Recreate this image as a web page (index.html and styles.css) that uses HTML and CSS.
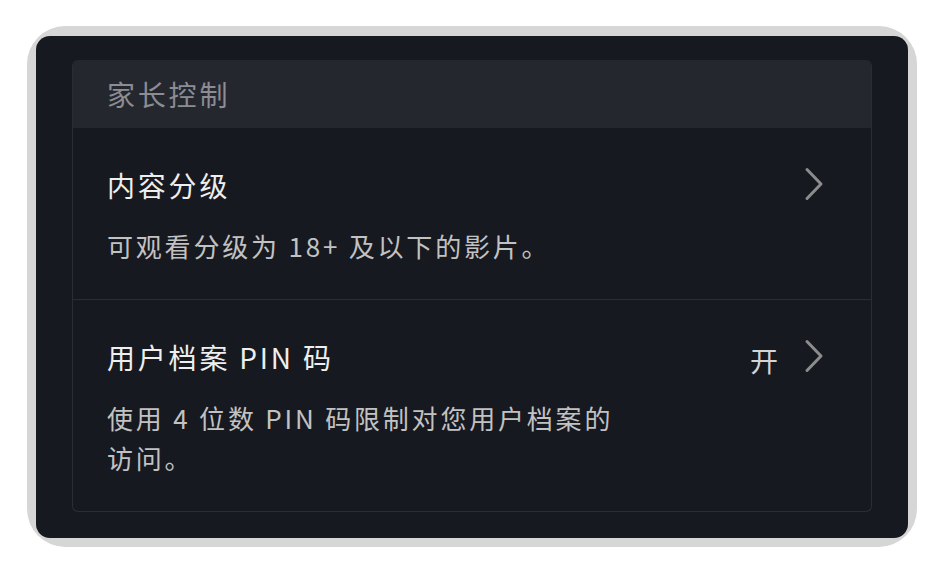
FILE: index.html
```html
<!DOCTYPE html>
<html lang="zh-CN">
<head>
  <meta charset="UTF-8">
  <meta name="viewport" content="width=device-width, initial-scale=1.0">
  <title>家长控制</title>
  <link rel="stylesheet" href="styles.css">
</head>
<body>
  <div class="frame">
    <div class="panel">
      <div class="card">
        <div class="card-header">家长控制</div>
        <div class="row">
          <div class="row-text">
            <div class="row-title">内容分级</div>
            <div class="row-desc">可观看分级为 18+ 及以下的影片。</div>
          </div>
          <div class="row-side">
            <svg class="chevron" width="20" height="34" viewBox="0 0 20 34">
              <polyline points="3,2.5 17,17 3,31.5" />
            </svg>
          </div>
        </div>
        <div class="row">
          <div class="row-text">
            <div class="row-title">用户档案 PIN 码</div>
            <div class="row-desc">使用 4 位数 PIN 码限制对您用户档案的访问。</div>
          </div>
          <div class="row-side">
            <span class="row-value">开</span>
            <svg class="chevron" width="20" height="34" viewBox="0 0 20 34">
              <polyline points="3,2.5 17,17 3,31.5" />
            </svg>
          </div>
        </div>
      </div>
    </div>
  </div>
</body>
</html>
```

FILE: styles.css
```css
body {
  margin: 0;
  background: #ffffff;
  font-family: "Noto Sans CJK SC", "Noto Sans", sans-serif;
}
.frame {
  margin: 26px 0 0 27px;
  width: 890px;
  box-sizing: border-box;
  padding: 10px 9px 9px 9px;
  background: #d6d6d6;
  border-radius: 38px;
}
.panel {
  background: #171920;
  border-radius: 14px;
  padding: 24px 36px 26px;
}
.card {
  border: 1px solid #2a2d35;
  border-top: none;
  border-radius: 6px;
  overflow: hidden;
}
.card-header {
  height: 68px;
  background: #25272f;
  color: #8b8d93;
  font-size: 28px;
  letter-spacing: 2.8px;
  line-height: 68px;
  padding-left: 34px;
}
.row {
  display: flex;
  justify-content: space-between;
  align-items: flex-start;
  padding: 37px 47px 33px 34px;
  border-bottom: 1px solid #2a2d35;
}
.row:last-child {
  border-bottom: none;
}
.row-title {
  color: #eeeeee;
  font-size: 28px;
  line-height: 40px;
  letter-spacing: 2.8px;
}
.row-desc {
  margin-top: 21px;
  max-width: 518px;
  color: #c2c2c2;
  font-size: 26px;
  line-height: 40px;
  letter-spacing: 2.8px;
}
.row-side {
  display: flex;
  align-items: center;
  gap: 26px;
  height: 40px;
}
.row-value {
  color: #d4d4d4;
  font-size: 28px;
  line-height: 40px;
  padding-top: 6px;
}
.chevron {
  fill: none;
  stroke: #8c8c8c;
  stroke-width: 3;
  stroke-linecap: round;
  stroke-linejoin: round;
  margin-top: -2px;
}
```
